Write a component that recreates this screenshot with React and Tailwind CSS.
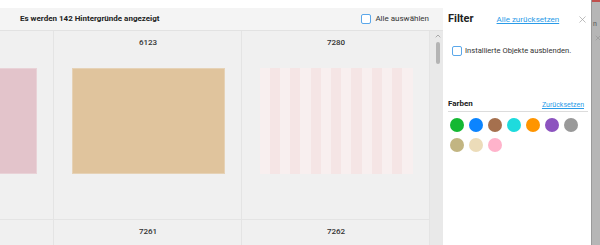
import React from 'react';
import { X, ChevronUp } from 'lucide-react';

const font = { fontFamily: 'Roboto, "Liberation Sans", sans-serif' };

const Tile = ({ kind }) => {
    if (kind === 'tan') return <div className="w-[153px] h-[106px] bg-[#e0c49d] border border-[#e6d2b6]" />;
    if (kind === 'pink') return <div className="w-[153px] h-[106px] bg-[#e3c4cb] border border-[#e9d2d7]" />;
    return (
        <div className="w-[153px] h-[106px] flex">
            {Array.from({ length: 15 }).map((_, i) => (
                <div key={i} className={`flex-1 ${i % 2 === 0 ? 'bg-[#f8efef]' : 'bg-[#f5e5e5]'}`} />
            ))}
        </div>
    );
};

const Cell = ({ label, tile, first }) => (
    <div className={`${first ? 'w-[54px]' : 'w-[188px]'} h-[188px] border-r border-[#e4e4e4] overflow-hidden shrink-0`}>
        <div className={`${first ? 'w-[188px] -ml-[134px]' : 'w-[188px]'} flex flex-col items-center`}>
            <div className="h-[23px] pt-[6px] text-[8px] font-medium text-[#333]">{label}</div>
            <div className="mt-[14px]">{tile && <Tile kind={tile} />}</div>
        </div>
    </div>
);

const dots = ['#14b833', '#0b84ff', '#a5704e', '#1edbdd', '#ff9500', '#8c53bf', '#999999', '#c2b582', '#ecdcb9', '#ffb3cb'];

export default function App() {
    return (
        <div className="w-[600px] h-[245px] flex bg-white overflow-hidden text-[#222]" style={font}>
            <div className="w-[443px] shrink-0 flex flex-col pt-2">
                <div className="h-[23px] bg-[#f4f4f4] border-b border-[#e2e2e2] flex items-center pl-[20px] pr-[13px]">
                    <span className="text-[8px] font-bold flex-1">Es werden 142 Hintergründe angezeigt</span>
                    <span className="w-[10px] h-[10px] rounded-[2px] border border-[#5aa7ea] bg-white mr-[4px]" />
                    <span className="text-[8px] text-[#333] mr-[1px]">Alle auswählen</span>
                </div>
                <div className="flex flex-1 min-h-0">
                    <div className="w-[430px] bg-[#f0f0f0] overflow-hidden">
                        <div className="flex border-b border-[#e4e4e4]">
                            <Cell first tile="pink" />
                            <Cell label="6123" tile="tan" />
                            <Cell label="7280" tile="stripes" />
                        </div>
                        <div className="flex">
                            <Cell first />
                            <Cell label="7261" />
                            <Cell label="7262" />
                        </div>
                    </div>
                    <div className="w-[13px] bg-[#e9e9e9] flex flex-col items-center pt-[1px] pl-[2px]">
                        <ChevronUp size={8} strokeWidth={2} className="text-[#888]" />
                        <div className="w-[4px] h-[22px] rounded-full bg-[#b4b4b4] mt-[2px]" />
                    </div>
                </div>
            </div>
            <div className="w-[148px] shrink-0 bg-white flex flex-col pl-[5px] pr-[3px]">
                <div className="h-[31px] flex items-center pt-[8px]">
                    <span className="text-[11px] font-bold text-[#222]">Filter</span>
                    <span className="ml-[23px] text-[8px] text-[#2a9be8] underline">Alle zurücksetzen</span>
                    <X size={11} strokeWidth={1.5} className="ml-auto mr-[0px] text-[#a0a0a0]" />
                </div>
                <div className="flex items-center mt-[14px] ml-[4px]">
                    <span className="w-[10px] h-[10px] rounded-[2px] border border-[#5aa7ea] mr-[3px]" />
                    <span className="text-[7.6px] text-[#333]">Installierte Objekte ausblenden.</span>
                </div>
                <div className="mt-[42px] flex items-end border-b border-[#dcdcdc] pb-[1px]">
                    <span className="text-[8px] font-bold text-[#222]">Farben</span>
                    <span className="ml-auto mr-[4px] text-[7px] text-[#2a9be8] underline">Zurücksetzen</span>
                </div>
                <div className="flex flex-wrap gap-x-[5px] gap-y-[6px] mt-[6px] ml-[2px] w-[135px]">
                    {dots.map((c) => (
                        <span key={c} className="w-[14px] h-[14px] rounded-full" style={{ backgroundColor: c }} />
                    ))}
                </div>
            </div>
            <div className="flex-1 bg-[#b6b6b6] border-l border-[#9a9a9a] flex flex-col">
                <div className="h-[2px] bg-[#c0504d]" />
                <div className="h-[19px]" />
                <span className="text-[7px] text-[#555] ml-[1px] leading-[7px]">n</span>
                <X size={8} strokeWidth={1.5} className="text-[#8a8a8a] mt-[6px] ml-[2px]" />
            </div>
        </div>
    );
}
